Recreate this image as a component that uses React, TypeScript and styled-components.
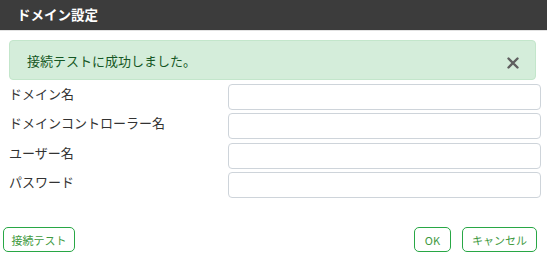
import React from 'react'
import styled, { createGlobalStyle } from 'styled-components'

const GlobalStyle = createGlobalStyle`
  html, body {
    margin: 0;
    padding: 0;
    background: #ffffff;
  }
  body {
    font-family: "Noto Sans CJK JP", "Noto Sans", "Liberation Sans", sans-serif;
    color: #333333;
  }
`

const Dialog = styled.div`
  width: 547px;
  height: 259px;
  display: flex;
  flex-direction: column;
  background: #ffffff;
`

const Header = styled.div`
  height: 31px;
  display: flex;
  align-items: center;
  padding-left: 17px;
  background: #3c3c3c;
  border-bottom: 1px solid #e2e2e2;
  box-sizing: border-box;
`

const Title = styled.h1`
  margin: 0;
  font-size: 13.5px;
  font-weight: 700;
  color: #ffffff;
  line-height: 1;
`

const Body = styled.div`
  display: flex;
  flex-direction: column;
  gap: 4px;
  padding: 9px 6px 0 9px;
`

const Alert = styled.div`
  height: 40px;
  margin-right: 5px;
  display: flex;
  align-items: center;
  justify-content: space-between;
  padding: 0 16px 0 17px;
  box-sizing: border-box;
  background: #d4edda;
  border: 1px solid #c3e6cb;
  border-radius: 4px;
  color: #155724;
  font-size: 13px;
`

const CloseButton = styled.button`
  border: 0;
  background: none;
  padding: 0;
  margin-top: 5px;
  width: 12px;
  height: 12px;
  display: flex;
  cursor: pointer;
`

const Form = styled.div`
  display: grid;
  grid-template-columns: 219px 313px;
  row-gap: 3.4px;
`

const Label = styled.label`
  font-size: 13px;
  color: #333333;
  line-height: 20px;
  align-self: start;
`

const Input = styled.input`
  height: 26px;
  box-sizing: border-box;
  border: 1px solid #ced4da;
  border-radius: 4px;
  background: #ffffff;
  outline: none;
`

const Footer = styled.div`
  margin-top: auto;
  display: flex;
  align-items: center;
  justify-content: space-between;
  padding: 0 10px 7px 3px;
`

const ButtonGroup = styled.div`
  display: flex;
  gap: 11px;
`

const OutlineButton = styled.button<{ $width: number }>`
  width: ${(p) => p.$width}px;
  height: 25px;
  box-sizing: border-box;
  border: 1px solid #28a745;
  border-radius: 5px;
  background: #ffffff;
  color: #3f9a3f;
  font-family: "Noto Sans CJK JP", "Noto Sans", sans-serif;
  font-size: 11px;
  padding: 0;
  cursor: pointer;
`

const fields = ['ドメイン名', 'ドメインコントローラー名', 'ユーザー名', 'パスワード']

export default function App() {
  return (
    <>
      <GlobalStyle />
      <Dialog>
        <Header>
          <Title>ドメイン設定</Title>
        </Header>
        <Body>
          <Alert>
            <span>接続テストに成功しました。</span>
            <CloseButton aria-label="閉じる">
              <svg width="12" height="12" viewBox="0 0 12 12">
                <path d="M1.5 1.5 L10.5 10.5 M10.5 1.5 L1.5 10.5" stroke="#5f5f5f" strokeWidth="2.4" strokeLinecap="round" />
              </svg>
            </CloseButton>
          </Alert>
          <Form>
            {fields.map((f) => (
              <React.Fragment key={f}>
                <Label>{f}</Label>
                <Input type={f === 'パスワード' ? 'password' : 'text'} />
              </React.Fragment>
            ))}
          </Form>
        </Body>
        <Footer>
          <OutlineButton $width={72}>接続テスト</OutlineButton>
          <ButtonGroup>
            <OutlineButton $width={37}>OK</OutlineButton>
            <OutlineButton $width={75}>キャンセル</OutlineButton>
          </ButtonGroup>
        </Footer>
      </Dialog>
    </>
  )
}
